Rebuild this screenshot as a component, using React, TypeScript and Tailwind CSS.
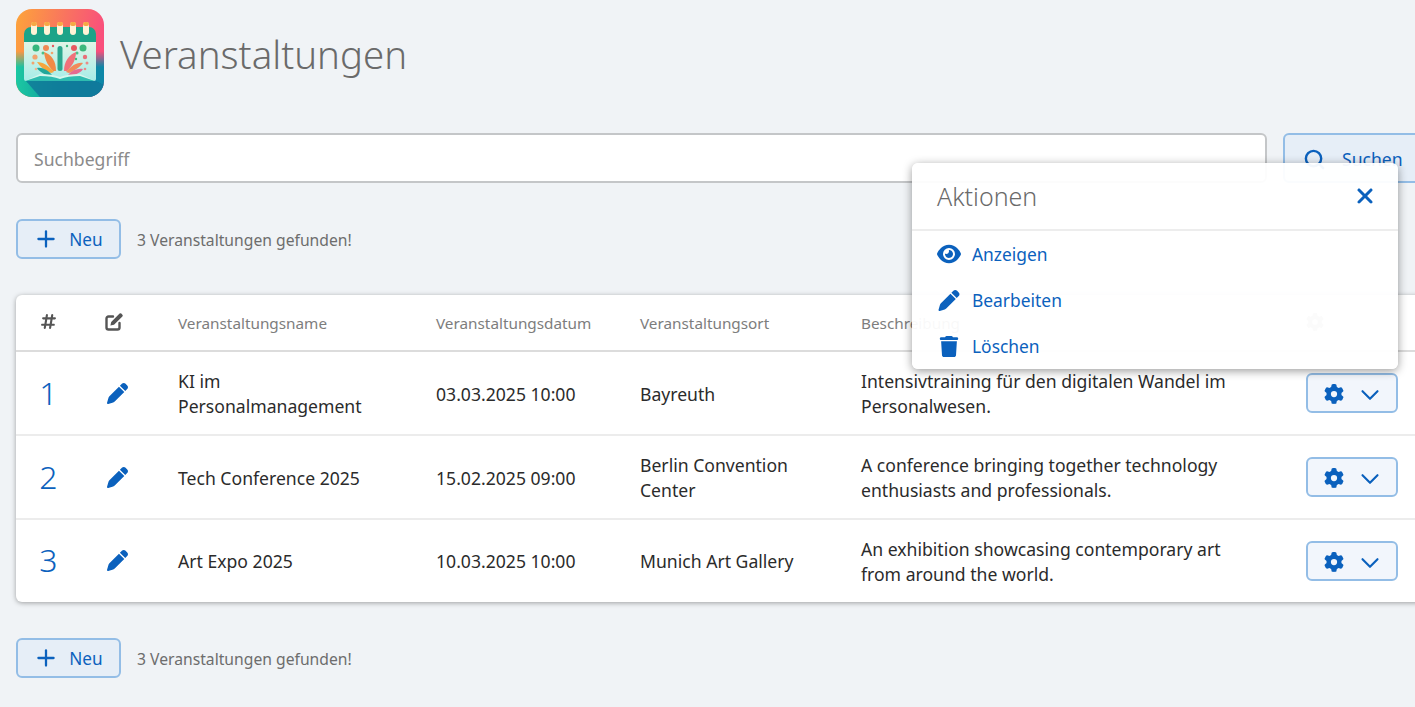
import React from "react";
import { FaPen, FaEye, FaTrash, FaGear, FaXmark, FaHashtag } from "react-icons/fa6";
import { Plus, Search, ChevronDown } from "lucide-react";

const dots: [number, number, number, string][] = [
  [20, 39, 3.5, "#34b67d"], [30, 39, 3, "#f08a52"], [37, 37, 1.2, "#e8595f"], [27, 44, 1.5, "#4cc08a"],
  [19, 48, 2.6, "#f2a46e"], [36, 44, 1.3, "#f2a46e"], [58, 39, 3, "#e8595f"], [67, 39, 3.5, "#3db87c"],
  [51, 37, 1.2, "#3db87c"], [61, 44, 1.5, "#4cc08a"], [69, 48, 2.2, "#ea6f78"], [17, 54, 1.5, "#f2a46e"],
  [71, 54, 1.5, "#ea8a88"], [20, 60, 1.3, "#f2b48e"], [69, 60, 1.3, "#ea8a88"], [60, 50, 1.2, "#3db87c"],
];

const Logo = () => (
  <svg viewBox="0 0 88 88" className="w-[88px] h-[88px] shrink-0">
    <defs>
      <linearGradient id="bg" x1="0" y1="0" x2="1" y2="0.2">
        <stop offset="0" stopColor="#fda43a" />
        <stop offset="0.55" stopColor="#f9745f" />
        <stop offset="1" stopColor="#f94f7c" />
      </linearGradient>
      <linearGradient id="bot" x1="0" y1="0" x2="1" y2="0">
        <stop offset="0" stopColor="#1cc8a2" />
        <stop offset="0.45" stopColor="#0f9c9e" />
        <stop offset="1" stopColor="#0d86a8" />
      </linearGradient>
      <linearGradient id="mask" x1="0" y1="0" x2="0" y2="1">
        <stop offset="0.48" stopColor="#000" />
        <stop offset="0.66" stopColor="#fff" />
      </linearGradient>
      <mask id="m"><rect width="88" height="88" fill="url(#mask)" /></mask>
      <linearGradient id="page" x1="0" y1="0" x2="0" y2="1">
        <stop offset="0" stopColor="#e8f6e6" />
        <stop offset="1" stopColor="#a6ece8" />
      </linearGradient>
      <clipPath id="r"><rect width="88" height="88" rx="16" /></clipPath>
      <filter id="b"><feGaussianBlur stdDeviation="0.7" /></filter>
    </defs>
    <g clipPath="url(#r)">
      <rect width="88" height="88" fill="url(#bg)" />
      <rect width="88" height="88" fill="url(#bot)" mask="url(#m)" />
      <g filter="url(#b)">
        <path d="M10 72 L80 72 L88 76 L88 88 L24 88 Z" fill="#0b7598" opacity="0.8" />
        <rect x="8" y="28" width="72" height="44" rx="2" fill="url(#page)" />
        <path d="M8 33 V25 a7 7 0 0 1 7 -7 h58 a7 7 0 0 1 7 7 V33 Z" fill="#1aa488" />
        {[18, 31, 44, 57, 70].map((x) => (
          <g key={x}>
            <rect x={x - 3} y="13" width="6" height="13" rx="3" fill="#fff3d6" />
            <rect x={x - 3} y="13" width="6" height="4" rx="2" fill="#f7a845" />
          </g>
        ))}
        {dots.map(([cx, cy, r, f], i) => (
          <circle key={i} cx={cx} cy={cy} r={r} fill={f} />
        ))}
        <rect x="41.5" y="37" width="5" height="25" rx="2.5" fill="#2aa78d" />
        <path d="M40 62 C40 52 36 46 28 43 C29 52 33 58 37 62 Z" fill="#f08a47" />
        <path d="M48 62 C48 52 53 46 60 43 C60 52 55 58 51 62 Z" fill="#f0717a" />
        <path d="M38 63 C33 57 27 53 21 53 C24 58 30 62 35 64 Z" fill="#f6a63c" />
        <path d="M50 63 C55 57 61 53 67 54 C64 58 58 62 53 64 Z" fill="#f18a5a" />
        <path d="M36 66 C32 61 26 58 21 59 C23 63 30 66 35 68 Z" fill="#22a79a" />
        <path d="M52 66 C56 61 62 59 67 60 C65 64 58 66 53 68 Z" fill="#e56a90" />
        <path d="M9 72 L24 65 C32 65 39 66 44 68 C49 66 56 65 64 65 L79 72 Z" fill="#d6f6ec" />
        <path d="M9 72 L24 67 C32 67 39 68 44 70 C49 68 56 67 64 67 L79 72 Z" fill="#2fbcb0" />
      </g>
    </g>
  </svg>
);

const NewBar = () => (
  <div className="flex items-center gap-4">
    <button className="w-[105px] h-[40px] flex items-center justify-center gap-[10px] pr-[1px] rounded-[6px] border-2 border-[#93bde6] bg-[#e6eef7] text-[#0b61bd] text-[17.2px]">
      <Plus size={26} strokeWidth={2.1} />
      <span className="pt-[2px]">Neu</span>
    </button>
    <span className="text-[15.7px] text-[#6d6d6d] pt-[3px]">3 Veranstaltungen gefunden!</span>
  </div>
);

const rows = [
  { n: "1", name: "KI im Personalmanagement", date: "03.03.2025 10:00", loc: "Bayreuth", desc: "Intensivtraining für den digitalen Wandel im Personalwesen." },
  { n: "2", name: "Tech Conference 2025", date: "15.02.2025 09:00", loc: "Berlin Convention Center", desc: "A conference bringing together technology enthusiasts and professionals." },
  { n: "3", name: "Art Expo 2025", date: "10.03.2025 10:00", loc: "Munich Art Gallery", desc: "An exhibition showcasing contemporary art from around the world." },
];

const cols = "grid grid-cols-[65px_97px_258px_204px_221px_445px_1fr] items-center";

export default function App() {
  return (
    <div className="relative w-full h-[707px] overflow-hidden bg-[#f0f3f6] text-[#2b2b2b]" style={{ fontFamily: '"Noto Sans", sans-serif' }}>
      <div className="w-[1440px] px-4 pt-[9px]">
        <div className="flex items-center gap-4 h-[88px]">
          <Logo />
          <h1 className="text-[38.4px] font-light text-[#6a6a6a] pt-[3px]">Veranstaltungen</h1>
        </div>
        <div className="flex gap-4 mt-9">
          <div className="flex-1 h-[50px] flex items-center px-4 pt-[2px] rounded-[6px] border-2 border-[#c4c6c8] bg-white text-[17.6px] text-[#8b8b8b]">Suchbegriff</div>
          <button className="w-[141px] h-[50px] flex items-center gap-[16px] pl-[18px] pt-[2px] rounded-[6px] border-2 border-[#93bde6] bg-[#e6eef7] text-[#0b61bd] text-[17.6px]">
            <Search size={23} strokeWidth={2.5} />
            <span>Suchen</span>
          </button>
        </div>
        <div className="mt-9"><NewBar /></div>
        <div className="mt-9 bg-white rounded-[6px] shadow-[0_1px_5px_rgba(0,0,0,0.35)] overflow-hidden">
          <div className={`${cols} h-[57px] border-b-2 border-[#dcdcdc] text-[15.3px] text-[#7d7d7d]`}>
            <div className="flex justify-center pb-[2px]"><FaHashtag size={17} className="text-[#555]" /></div>
            <div className="flex pl-[23px] pb-[2px]">
              <svg viewBox="0 0 20 20" className="w-[20px] h-[20px] text-[#555]" fill="none">
                <path d="M9 4.5H4.5a2 2 0 0 0-2 2v9a2 2 0 0 0 2 2h9a2 2 0 0 0 2-2V11" stroke="currentColor" strokeWidth="2.4" strokeLinecap="round" />
                <path d="M15.6 1.6a1.2 1.2 0 0 1 1.7 0l1.1 1.1a1.2 1.2 0 0 1 0 1.7L10 12.8l-3.6.8.8-3.6z" fill="currentColor" />
              </svg>
            </div>
            <div className="pt-[1px]">Veranstaltungsname</div>
            <div className="pt-[1px]">Veranstaltungsdatum</div>
            <div className="pt-[1px]">Veranstaltungsort</div>
            <div className="pt-[1px]">Beschreibung</div>
            <div className="pb-[2px]"><FaGear size={18} className="text-[#aaa]" /></div>
          </div>
          {rows.map((r, i) => (
            <div key={r.n} className={`${cols} ${i < 2 ? "h-[84px] pt-[2px] border-b-2 border-[#ececec]" : "h-[82px] pt-[1px]"} text-[17.6px] leading-[25px]`}>
              <div className="text-center text-[32px] font-light text-[#0b61bd] pb-[4px]">{r.n}</div>
              <div className="flex pl-[26px] pb-[2px]"><FaPen size={21} className="text-[#0b61bd]" /></div>
              <div className="pr-[70px]">{r.name}</div>
              <div>{r.date}</div>
              <div className="pr-[30px]">{r.loc}</div>
              <div className="pr-[70px]">{r.desc}</div>
              <div className="pb-[2px]">
                <button className="w-[92px] h-[40px] flex items-center justify-center gap-[11px] pl-[4px] rounded-[6px] border-2 border-[#93bde6] bg-[#f2f6fc] text-[#0b61bd]">
                  <FaGear size={20} className="mt-[2px]" />
                  <ChevronDown size={30} strokeWidth={1.7} className="mt-[4px]" />
                </button>
              </div>
            </div>
          ))}
        </div>
        <div className="mt-9"><NewBar /></div>
      </div>

      <div className="absolute left-[912px] top-[163px] w-[486px] h-[206px] rounded-[6px] bg-white/95 shadow-[0_2px_10px_rgba(0,0,0,0.4)]">
        <div className="h-[68px] flex items-center justify-between pl-[25px] pr-[21px] border-b-2 border-[#ededed]">
          <span className="text-[25px] font-light text-[#6a6a6a] pt-[2px]">Aktionen</span>
          <FaXmark size={24} className="text-[#0b61bd]" />
        </div>
        <div className="pl-[25px] text-[17.4px] text-[#0b61bd]">
          <div className="h-[46px] flex items-center gap-[11px]"><FaEye size={22} className="w-[24px]" /><span>Anzeigen</span></div>
          <div className="h-[46px] flex items-center gap-[11px]"><FaPen size={21} className="w-[24px]" /><span>Bearbeiten</span></div>
          <div className="h-[46px] flex items-center gap-[11px]"><FaTrash size={21} className="w-[24px]" /><span>Löschen</span></div>
        </div>
      </div>
    </div>
  );
}
